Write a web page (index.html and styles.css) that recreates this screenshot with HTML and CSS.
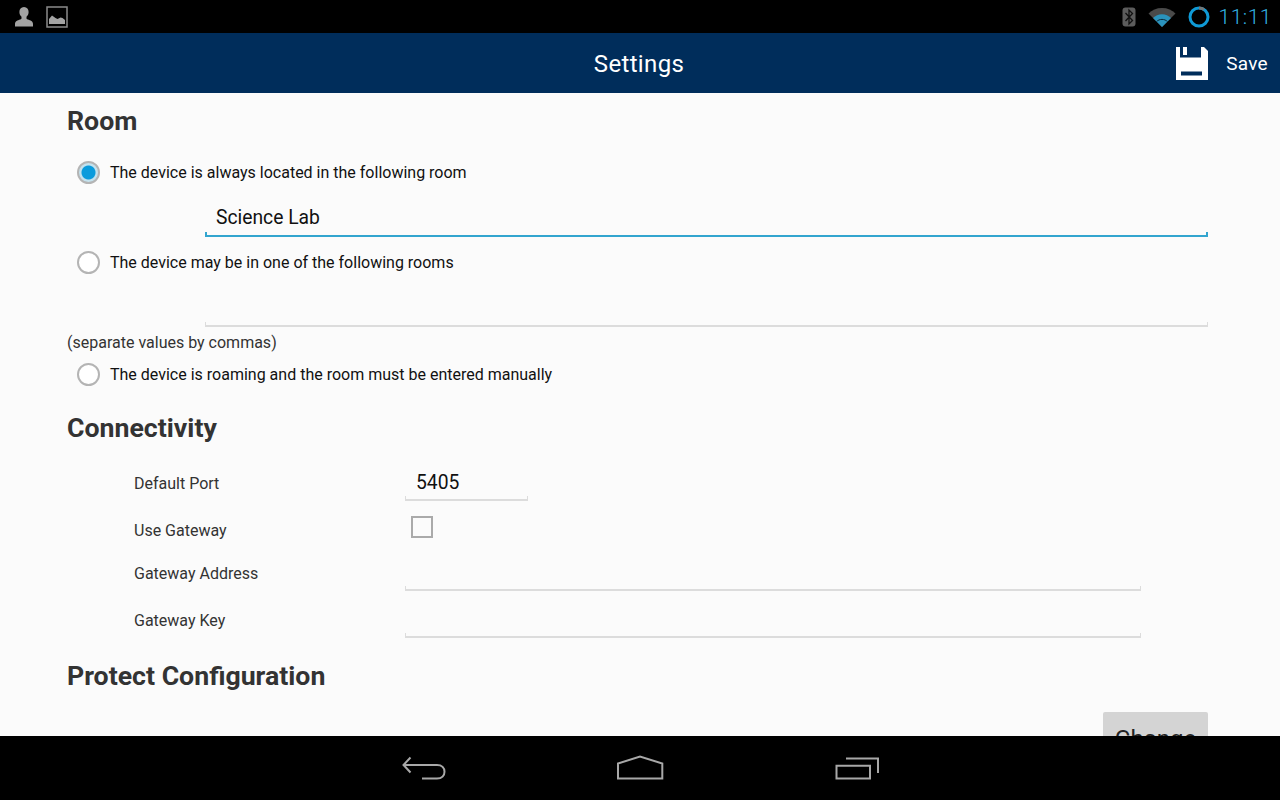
FILE: index.html

```html
<!DOCTYPE html>
<html lang="en">
<head>
  <meta charset="UTF-8" />
  <title>Settings</title>
  <link rel="stylesheet" href="styles.css">
</head>
<body>
  <div class="statusbar">
    <div class="status-left">
      <svg class="ic-user" width="20" height="22" viewBox="0 0 20 22"><path d="M10 1c3 0 4.600 2.200 4.600 5 0 2-.8 3.700-2.100 4.800v1.400c0 .7.500 1 1.300 1.300 2.700.8 5.200 1.700 5.200 4.500v2.500H1v-2.500c0-2.800 2.500-3.700 5.200-4.500.8-.3 1.300-.6 1.300-1.300v-1.400C6.200 9.700 5.400 8 5.400 6c0-2.800 1.600-5 4.600-5z" fill="#a3a3a3"/></svg>
      <svg class="ic-pic" width="22" height="22" viewBox="0 0 22 22"><rect x="1" y="1" width="20" height="20" fill="none" stroke="#8a8a8a" stroke-width="1.500"/><path d="M3 18v-5l3-3.500 3.500 2.500 2 1 3-1.500 2 .5 2.500 2V18z" fill="#a3a3a3"/></svg>
    </div>
    <div class="status-right">
      <svg width="14" height="20" viewBox="0 0 14 20"><rect x="0.500" y="0.500" width="13" height="19" rx="3" fill="#5c5c5c"/><path d="M3.500 6l7 7.500-3.500 3.500V3l3.500 3.500-7 7.500" fill="none" stroke="#111" stroke-width="1.300"/></svg>
      <svg class="ic-wifi" width="28" height="20" viewBox="0 0 28 20"><path d="M0.500 6.500C4 3 8.500 1 14 1s10 2 13.500 5.500L14 20z" fill="#4a4a4a"/><path d="M5 11c2.400-2.300 5.500-3.700 9-3.700s6.600 1.400 9 3.700l-9 9z" fill="#2a93bd"/><path d="M8.500 14.500c1.500-1.300 3.400-2.100 5.500-2.100s4 .8 5.500 2.100" fill="none" stroke="#0c2a38" stroke-width="1"/></svg>
      <svg class="ic-sync" width="22" height="22" viewBox="0 0 22 22"><circle cx="11" cy="11" r="9" fill="none" stroke="#0f9ad6" stroke-width="3"/><path d="M11 2a9 9 0 0 1 5 1.500" fill="none" stroke="#777" stroke-width="3"/></svg>
      <span class="clock">11:11</span>
    </div>
  </div>

  <header class="actionbar">
    <h1>Settings</h1>
    <button class="save">
      <svg width="32" height="33" viewBox="0 0 32 33"><path d="M0 0H4V10.500H25V0H28L32 4V33H0Z" fill="#fff"/><rect x="7" y="0" width="4" height="8" fill="#fff"/><rect x="5" y="24.500" width="21" height="4" fill="#002d5b"/></svg>
      <span>Save</span>
    </button>
  </header>

  <main class="content">
    <h2 class="h-room">Room</h2>
    <label class="radio-row r1"><span class="radio checked"></span>The device is always located in the following room</label>
    <div class="wide-wrap w1"><input class="field active" type="text" value="Science Lab"></div>
    <label class="radio-row r2"><span class="radio"></span>The device may be in one of the following rooms</label>
    <div class="wide-wrap w2"><input class="field" type="text"></div>
    <p class="note">(separate values by commas)</p>
    <label class="radio-row r3"><span class="radio"></span>The device is roaming and the room must be entered manually</label>

    <h2 class="h-conn">Connectivity</h2>
    <div class="form-rows">
      <div class="form-row"><span class="form-label port-label">Default Port</span><input class="field port" type="text" value="5405"></div>
      <div class="form-row"><span class="form-label gw">Use Gateway</span><span class="check"></span></div>
      <div class="form-row"><span class="form-label up">Gateway Address</span><input class="field long" type="text"></div>
      <div class="form-row"><span class="form-label up">Gateway Key</span><input class="field long" type="text"></div>
    </div>

    <h2 class="h-protect">Protect Configuration</h2>
    <div class="btn-row"><button class="change">Change</button></div>
  </main>

  <nav class="navbar">
    <svg width="46" height="26" viewBox="0 0 46 26"><path d="M9.500 2.500L2.500 10L9.500 17.500M2.500 10H36C41 10 43.500 13 43.500 16.700C43.500 20.500 41 23.500 36 23.500H21" fill="none" stroke="#a8a8a8" stroke-width="2"/></svg>
    <svg width="48" height="26" viewBox="0 0 48 26"><path d="M1 23.500V8.500L23 1.500L45.300 8.500V23.500Z" fill="none" stroke="#a8a8a8" stroke-width="2"/></svg>
    <svg width="46" height="26" viewBox="0 0 46 26"><path d="M11 3.500H43V18M1.500 10.700H35V23.500H1.500Z" fill="none" stroke="#a8a8a8" stroke-width="2"/></svg>
  </nav>
</body>
</html>
```

FILE: styles.css

```css
* {
  box-sizing: border-box;
}
body {
  margin: 0;
  height: 800px;
  overflow: hidden;
  display: flex;
  flex-direction: column;
  font-family: Roboto, "Liberation Sans", sans-serif;
  background-color: #000;
}
.statusbar {
  height: 33px;
  background: #000;
  display: flex;
  justify-content: space-between;
  align-items: center;
  padding: 0 8px 0 14px;
}
.status-left, .status-right {
  display: flex;
  align-items: center;
}
.ic-user {
  margin-right: 12px;
}
.ic-wifi {
  margin-left: 12px;
}
.ic-sync {
  margin-left: 12px;
}
.clock {
  margin-left: 8px;
  color: #33b5e5;
  font-size: 21px;
  letter-spacing: 0.5px;
  font-weight: 300;
}
.actionbar {
  height: 60px;
  background: #002d5b;
  display: flex;
  align-items: center;
  justify-content: center;
  position: relative;
}
.actionbar h1 {
  margin: 2px 2px 0 0;
  font-size: 24px;
  font-weight: 400;
  letter-spacing: 0.35px;
  color: #fff;
}
.save {
  position: absolute;
  right: 12px;
  top: 14px;
  display: flex;
  align-items: center;
  padding: 0;
  border: none;
  background: none;
  color: #fff;
  font-family: inherit;
  font-size: 19px;
  letter-spacing: 0.3px;
}
.save span {
  margin-left: 18px;
}
.content {
  height: 643px;
  overflow: hidden;
  background: #fbfbfb;
  padding: 0 72px 0 67px;
  color: #333;
}
h2 {
  margin: 0;
  font-size: 26.7px;
  line-height: 32px;
  font-weight: 700;
  color: #333;
}
.h-room {
  padding-top: 12px;
  height: 44px;
}
.h-conn {
  margin-top: 26px;
}
.h-protect {
  margin-top: 16px;
}
.radio-row {
  display: flex;
  align-items: center;
  height: 24px;
  padding-left: 10px;
  font-size: 16px;
  color: #111;
}
.r1 {
  margin-top: 23px;
}
.r2 {
  margin-top: 13px;
}
.r3 {
  margin-top: 9px;
}
.radio {
  width: 23px;
  height: 23px;
  margin-right: 10px;
  border: 2px solid #b4b4b4;
  border-radius: 50%;
  background: #fff;
  flex: none;
}
.radio.checked {
  background: radial-gradient(circle, #0a9bdc 0 6.5px, #c4e2ee 7.5px 100%);
}
.wide-wrap {
  padding-left: 138px;
}
.w1, .w2 {
  margin-top: 14px;
}
.field {
  display: block;
  width: 100%;
  height: 39px;
  padding: 0 11px;
  border: none;
  outline: none;
  font-family: inherit;
  font-size: 19.3px;
  color: #111;
  background:
    linear-gradient(#dcdcdc, #dcdcdc) left bottom / 100% 2px no-repeat,
    linear-gradient(#dcdcdc, #dcdcdc) left bottom / 1px 5px no-repeat,
    linear-gradient(#dcdcdc, #dcdcdc) right bottom / 1px 5px no-repeat;
}
.field.active {
  background:
    linear-gradient(#33a5cf, #33a5cf) left bottom / 100% 2px no-repeat,
    linear-gradient(#33a5cf, #33a5cf) left bottom / 2px 5px no-repeat,
    linear-gradient(#33a5cf, #33a5cf) right bottom / 2px 5px no-repeat;
}
.note {
  margin: 6px 0 0;
  height: 20px;
  line-height: 20px;
  font-size: 16px;
  color: #333;
}
.form-rows {
  margin-top: 12px;
}
.form-row {
  display: flex;
  align-items: flex-start;
  height: 47px;
  padding-left: 67px;
}
.form-label {
  width: 271px;
  flex: none;
  font-size: 16px;
  line-height: 20px;
  margin-top: 19px;
  color: #333;
}
.form-label.port-label {
  margin-top: 18px;
}
.form-label.gw {
  margin-top: 18px;
}
.form-label.up {
  margin-top: 14px;
}
.field.port {
  width: 123px;
  height: 37px;
  margin-top: 8px;
}
.field.long {
  width: 736px;
  margin-top: 2px;
}
.check {
  width: 22px;
  height: 22px;
  margin: 13px 0 0 6px;
  border: 2px solid #aaa;
  background: #fbfbfb;
}
.btn-row {
  display: flex;
  justify-content: flex-end;
  margin-top: 20px;
}
.change {
  width: 105px;
  height: 53px;
  border: none;
  border-radius: 2px;
  background: #d4d4d4;
  font-family: inherit;
  font-size: 24px;
  color: #222;
}
.navbar {
  height: 64px;
  background: #000;
  display: flex;
  align-items: center;
  justify-content: center;
  gap: 170px;
  padding-left: 2px;
}
```
